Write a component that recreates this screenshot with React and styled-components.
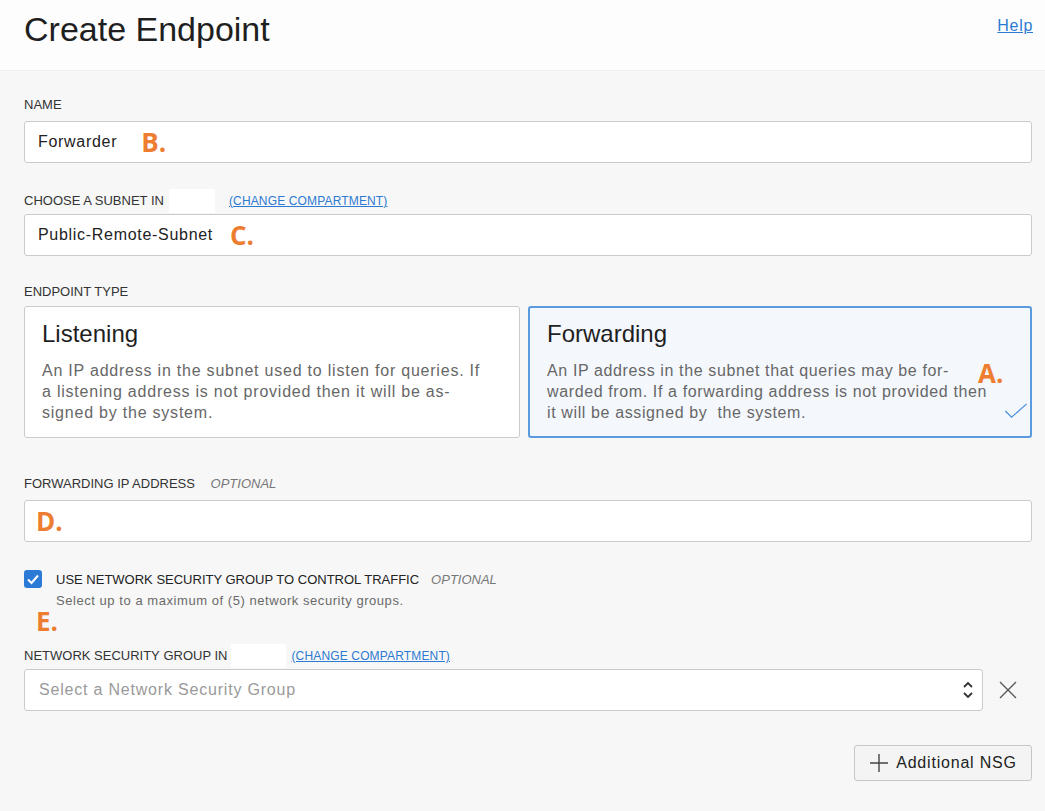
import React from "react";
import styled, { createGlobalStyle } from "styled-components";

const GlobalStyle = createGlobalStyle`
  html, body {
    margin: 0;
    padding: 0;
    background: #f7f7f7;
    font-family: "Liberation Sans", Arial, sans-serif;
    color: #222;
  }
`;

export default function App() {
  return (
    <Page>
      <GlobalStyle />
      <Header>
        <Title>Create Endpoint</Title>
        <HelpLink href="#">Help</HelpLink>
      </Header>
      <Body>
        <Field $top={27}>
          <Label>NAME</Label>
          <Input>
            Forwarder
            <Mark $left={24}>B.</Mark>
          </Input>
        </Field>

        <Field $top={26}>
          <Label $tall>
            CHOOSE A SUBNET IN
            <Redacted $w={46} $ml={5} />
            <SmallLink href="#" $ml={14}>(CHANGE COMPARTMENT)</SmallLink>
          </Label>
          <Input>
            Public-Remote-Subnet
            <Mark $left={17}>C.</Mark>
          </Input>
        </Field>

        <Field $top={29}>
          <Label $mb={7}>ENDPOINT TYPE</Label>
          <Cards>
            <Card>
              <CardTitle>Listening</CardTitle>
              <CardText>
                An IP address in the subnet used to listen for queries. If
                <br />a listening address is not provided then it will be as-
                <br />signed by the system.
              </CardText>
            </Card>
            <Card $selected>
              <CardTitle>Forwarding</CardTitle>
              <CardText $tight>
                An IP address in the subnet that queries may be for-
                <br />warded from. If a forwarding address is not provided then
                <br />it will be assigned by&nbsp; the system.
              </CardText>
              <CardMark>A.</CardMark>
              <Tick viewBox="0 0 26 18">
                <polyline points="1,9 8,16 25,1" />
              </Tick>
            </Card>
          </Cards>
        </Field>

        <Field $top={39}>
          <Label>
            FORWARDING IP ADDRESS <Optional>OPTIONAL</Optional>
          </Label>
          <Input>
            <Mark $left={-2}>D.</Mark>
          </Input>
        </Field>

        <CheckRow>
          <CheckBox>
            <svg viewBox="0 0 18 18" width="18" height="18">
              <polyline
                points="4,9.5 7.5,13 14,5.5"
                fill="none"
                stroke="#fff"
                strokeWidth="2"
              />
            </svg>
          </CheckBox>
          <CheckText>
            <CheckTitle>
              USE NETWORK SECURITY GROUP TO CONTROL TRAFFIC
              <Optional>OPTIONAL</Optional>
            </CheckTitle>
            <Hint>Select up to a maximum of (5) network security groups.</Hint>
          </CheckText>
        </CheckRow>
        <LooseMark>E.</LooseMark>

        <Field $top={0}>
          <Label $tall>
            NETWORK SECURITY&nbsp;GROUP IN
            <Redacted $w={55} $ml={4} />
            <SmallLink href="#" $ml={5}>(CHANGE COMPARTMENT)</SmallLink>
          </Label>
          <SelectRow>
            <Select>
              <Placeholder>Select a Network Security Group</Placeholder>
              <svg width="12" height="20" viewBox="0 0 12 20">
                <polyline points="2,7 6,3 10,7" fill="none" stroke="#333" strokeWidth="1.8" />
                <polyline points="2,13 6,17 10,13" fill="none" stroke="#333" strokeWidth="1.8" />
              </svg>
            </Select>
            <RemoveBtn>
              <svg width="18" height="18" viewBox="0 0 18 18">
                <path d="M1 1 L17 17 M17 1 L1 17" stroke="#555" strokeWidth="1.3" />
              </svg>
            </RemoveBtn>
          </SelectRow>
        </Field>

        <Actions>
          <AddButton>
            <svg width="20" height="20" viewBox="0 0 20 20">
              <path d="M10 1 V19 M1 10 H19" stroke="#444" strokeWidth="1.4" />
            </svg>
            Additional NSG
          </AddButton>
        </Actions>
      </Body>
    </Page>
  );
}

const Page = styled.div`
  width: 1045px;
  min-height: 811px;
  background: #f7f7f7;
`;

const Header = styled.div`
  height: 71px;
  box-sizing: border-box;
  background: #fdfdfd;
  border-bottom: 1px solid #efefef;
  display: flex;
  justify-content: space-between;
  align-items: flex-start;
  padding: 0 12px 0 24px;
`;

const Title = styled.h1`
  margin: 9px 0 0;
  font-size: 34px;
  font-weight: 400;
  line-height: 40px;
  color: #1f1f1f;
`;

const HelpLink = styled.a`
  margin-top: 17px;
  font-size: 16px;
  letter-spacing: 0.7px;
  color: #2c7ad2;
  text-decoration: underline;
`;

const Body = styled.div`
  padding: 0 13px 0 24px;
`;

const Field = styled.div`
  margin-top: ${(p) => p.$top}px;
`;

const Label = styled.div`
  display: flex;
  align-items: center;
  height: ${(p) => (p.$tall ? 24 : 14)}px;
  margin-bottom: ${(p) => (p.$mb ?? (p.$tall ? 1 : 9))}px;
  font-size: 13px;
  line-height: 14px;
  color: #333;
  white-space: pre;
`;

const Optional = styled.span`
  margin-left: 12px;
  font-style: italic;
  color: #777;
`;

const Redacted = styled.span`
  display: inline-block;
  width: ${(p) => p.$w}px;
  height: 24px;
  margin-left: ${(p) => p.$ml}px;
  background: #fff;
`;

const SmallLink = styled.a`
  margin-left: ${(p) => p.$ml}px;
  font-size: 12px;
  letter-spacing: 0.15px;
  color: #2c7ad2;
  text-decoration: underline;
`;

const Input = styled.div`
  height: 42px;
  box-sizing: border-box;
  background: #fff;
  border: 1px solid #c9cbcd;
  border-radius: 3px;
  display: flex;
  align-items: center;
  padding: 0 13px;
  font-size: 16px;
  letter-spacing: 0.7px;
  color: #222;
`;

const Mark = styled.span`
  margin-left: ${(p) => p.$left}px;
  font-family: "Open Sans", sans-serif;
  font-weight: 700;
  font-size: 26px;
  line-height: 30px;
  letter-spacing: 0;
  color: #ed7d31;
`;

const Cards = styled.div`
  display: grid;
  grid-template-columns: 496px 1fr;
  gap: 8px;
`;

const Card = styled.div`
  position: relative;
  height: 132px;
  box-sizing: border-box;
  padding: 13px 17px 0;
  border-radius: 3px;
  background: ${(p) => (p.$selected ? "#f4f8fd" : "#fff")};
  border: ${(p) => (p.$selected ? "2px solid #5a9be0" : "1px solid #c9cbcd")};
  ${(p) => p.$selected && "padding: 12px 16px 0 17px;"}
`;

const CardTitle = styled.div`
  font-size: 24px;
  line-height: 28px;
  color: #1f1f1f;
`;

const CardText = styled.div`
  margin-top: 12px;
  font-size: 16px;
  line-height: 21px;
  letter-spacing: ${(p) => (p.$tight ? 0.62 : 0.78)}px;
  color: #676767;
  white-space: nowrap;
`;

const CardMark = styled.span`
  position: absolute;
  left: 448px;
  top: 50px;
  font-family: "Open Sans", sans-serif;
  font-weight: 700;
  font-size: 26px;
  line-height: 30px;
  color: #ed7d31;
`;

const Tick = styled.svg`
  position: absolute;
  right: 2px;
  bottom: 17px;
  width: 24px;
  height: 16px;
  fill: none;
  stroke: #4a90d9;
  stroke-width: 1.4;
`;

const CheckRow = styled.div`
  margin-top: 28px;
  display: flex;
  align-items: flex-start;
  gap: 14px;
`;

const CheckBox = styled.div`
  width: 18px;
  height: 18px;
  border-radius: 3px;
  background: #2b7bd6;
  display: flex;
`;

const CheckText = styled.div`
  display: flex;
  flex-direction: column;
  padding-top: 2px;
`;

const CheckTitle = styled.div`
  font-size: 13px;
  line-height: 16px;
  color: #222;
`;

const Hint = styled.div`
  margin-top: 5px;
  font-size: 13px;
  line-height: 16px;
  letter-spacing: 0.55px;
  color: #6a6a6a;
`;

const LooseMark = styled.div`
  margin-left: 12px;
  margin-top: -3px;
  height: 38px;
  font-family: "Open Sans", sans-serif;
  font-weight: 700;
  font-size: 26px;
  line-height: 30px;
  color: #ed7d31;
`;

const SelectRow = styled.div`
  display: flex;
  align-items: center;
  gap: 16px;
`;

const Select = styled.div`
  flex: 1;
  height: 42px;
  box-sizing: border-box;
  background: #fff;
  border: 1px solid #c9cbcd;
  border-radius: 3px;
  display: flex;
  align-items: center;
  justify-content: space-between;
  padding: 0 8px 0 14px;
`;

const Placeholder = styled.span`
  font-size: 16px;
  letter-spacing: 0.8px;
  color: #9a9a9a;
`;

const RemoveBtn = styled.div`
  width: 18px;
  height: 18px;
  margin-right: 15px;
  display: flex;
`;

const Actions = styled.div`
  margin-top: 34px;
  display: flex;
  justify-content: flex-end;
`;

const AddButton = styled.button`
  width: 178px;
  height: 36px;
  box-sizing: border-box;
  display: flex;
  align-items: center;
  justify-content: center;
  gap: 7px;
  background: #f4f4f4;
  border: 1px solid #c4c6c8;
  border-radius: 3px;
  font-family: "Liberation Sans", Arial, sans-serif;
  font-size: 16px;
  letter-spacing: 0.8px;
  color: #222;
`;
